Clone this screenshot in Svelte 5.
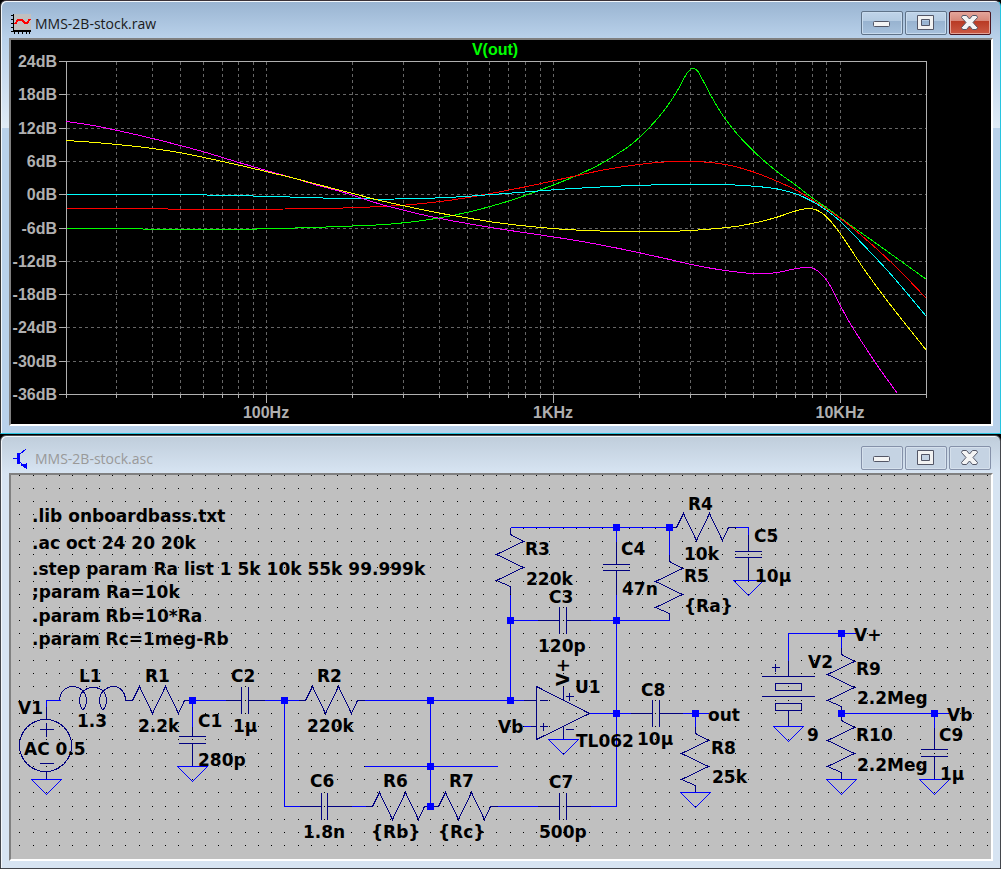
<script>
    // plot area in svg units: 20Hz..20kHz across, 24dB..-36dB down
    const left = 66
    const right = 926
    const top = 61
    const bottom = 394

    const xOf = f => Math.floor(left + 0.3 + (right - left) * Math.log10(f / 20) / 3)
    const yOf = db => Math.floor(top + 0.5 + (bottom - top) * (24 - db) / 60)

    const levels = [24, 18, 12, 6, 0, -6, -12, -18, -24, -30, -36]
    const freqs = [10, 100, 1000, 10000]
        .flatMap(decade => [1, 2, 3, 4, 5, 6, 7, 8, 9].map(n => n * decade))
        .filter(f => f > 20 && f < 20000)
    const decades = [
        { f: 100, text: '100Hz' },
        { f: 1000, text: '1KHz' },
        { f: 10000, text: '10KHz' }
    ]

    const traces = [
        {
            color: '#00ff00',
            points: [[66, 228], [280, 228], [310, 227], [340, 226], [363, 225], [385, 224], [403, 222.3], [420, 220.3], [440, 217.2], [467, 211.8], [489, 206.2], [509, 200.3], [525, 194.8], [553, 184.5], [580, 173.3], [600, 163.5], [616, 154], [632, 143], [648, 128], [660, 114.5], [670, 101], [677, 90], [682, 80.5], [687, 72], [690, 69], [693, 67.8], [697, 70.5], [703, 81], [712, 98], [720, 111.5], [738, 135], [754, 151.5], [776, 170.7], [795, 184.5], [812, 197.5], [827, 208], [853, 226.8], [880, 246], [926, 279]]
        },
        {
            color: '#ff0000',
            points: [[66, 208], [320, 208], [353, 207.2], [381, 206], [403, 204.7], [420, 203.2], [440, 201], [460, 198.2], [489, 193.2], [525, 186.3], [553, 180.3], [580, 174.3], [604, 169.3], [640, 163.8], [662, 161.6], [683, 160.8], [705, 161.6], [726, 164.2], [753, 171.5], [777, 181], [795, 189.3], [812, 199.5], [827, 209], [840, 218], [863, 236.7], [898, 269], [926, 298]]
        },
        {
            color: '#00ffff',
            points: [[66, 194], [180, 194], [232, 195], [280, 196.2], [315, 197.3], [353, 198.3], [395, 198.5], [420, 198], [440, 197.3], [467, 195.8], [489, 194.2], [525, 191.5], [553, 189.3], [600, 186.5], [640, 184.8], [690, 184], [726, 184.2], [753, 185.7], [778, 188.7], [795, 193.2], [812, 201], [827, 210.5], [840, 221], [863, 244.5], [887, 270], [926, 316]]
        },
        {
            color: '#ff00ff',
            points: [[66, 121], [88, 124.2], [116, 129.8], [152, 138], [180, 145.1], [203, 151.3], [240, 162.5], [267, 170.3], [292, 177.3], [316, 184.5], [340, 191], [381, 204], [403, 209.7], [439, 217.9], [467, 223], [489, 226.8], [525, 232.3], [553, 236.4], [587, 242], [620, 248.3], [639, 252.3], [667, 258.5], [690, 263.8], [726, 270.2], [753, 273], [768, 273], [778, 271.8], [796, 268], [804, 267], [811, 267.3], [817, 270.3], [823, 275.8], [829, 284], [839, 303.5], [850, 323.5], [863, 344], [881, 371], [897, 393]]
        },
        {
            color: '#ffff00',
            points: [[66, 140], [95, 142], [116, 143.9], [152, 148], [180, 152.3], [203, 156.9], [240, 165], [267, 171.4], [292, 177.4], [316, 183.7], [353, 193.2], [381, 200.3], [403, 205.2], [439, 212.6], [467, 217.5], [489, 221.1], [525, 225.5], [553, 228.1], [590, 230.2], [630, 231.2], [653, 231.2], [690, 230], [708, 228.7], [737, 225.7], [753, 222.7], [777, 216.5], [795, 210.5], [805, 208.2], [812, 208.3], [820, 211.6], [827, 217.3], [840, 233.5], [863, 268], [882, 294], [926, 350]]
        }
    ]

    // tangent at point i, weighted by the length of both neighbouring spans
    function slope(p, i) {
        const [x, y] = p[i]
        const [x0, y0] = p[i - 1] ?? [x, y]
        const [x1, y1] = p[i + 1] ?? [x, y]
        if (x === x0) return (y1 - y) / (x1 - x)
        if (x === x1) return (y - y0) / (x - x0)
        const before = (y - y0) / (x - x0)
        const after = (y1 - y) / (x1 - x)
        return (before * (x1 - x) + after * (x - x0)) / (x1 - x0)
    }

    function spline(p) {
        let d = `M${p[0][0]} ${p[0][1]}`
        for (let i = 0; i < p.length - 1; i++) {
            const [x0, y0] = p[i]
            const [x1, y1] = p[i + 1]
            const step = (x1 - x0) / 3
            d += ` C${x0 + step} ${y0 + slope(p, i) * step} ${x1 - step} ${y1 - slope(p, i + 1) * step} ${x1} ${y1}`
        }
        return d
    }

    // schematic
    let dots = ''
    for (let row = 0; row < 29; row++) {
        for (let col = 0; col < 74; col++) {
            dots += `M${Math.floor(19.9 + 13.25 * col)} ${Math.floor(475.1 + 13.24 * row)}h1v1h-1z`
        }
    }

    const wires = [
        'M46 706V700H60', 'M192 700H225', 'M264 700H298', 'M364 700H523', 'M192 700V726',
        'M284 700V806H299', 'M351 806H365', 'M364 766H497', 'M430 700V806', 'M497 806H537',
        'M590 806H616V594M616 541V527', 'M510 527H669V554', 'M510 594V700', 'M510 620H537',
        'M590 620H669', 'M616 713H630', 'M682 713H708', 'M695 713V726', 'M735 527H748V534',
        'M523 726H530', 'M788 660V633H855', 'M841 633V647', 'M841 713H948', 'M934 713V727',
        'M589 713H616'
    ]

    const pins = [
        'M46 706V719', 'M46 771V779', 'M225 700H241', 'M248 700H264', 'M192 726V736', 'M192 743V766',
        'M299 806H321', 'M327 806H351', 'M537 620H559', 'M566 620H590', 'M537 806H559', 'M566 806H590',
        'M616 541V564M616 570V594', 'M748 534V551M748 557V580', 'M630 713H652M659 713H682',
        'M934 727V749M934 756V779', 'M788 660V676M788 710V726'
    ]

    const hResistors = [[125, 700], [298, 700], [365, 806], [431, 806], [669, 527]]
    const vResistors = [[510, 527], [669, 554], [695, 726], [841, 647], [841, 713]]
    const hCaps = [[192, 736, 743], [616, 564, 570], [748, 551, 557], [934, 749, 756]]
    const vCaps = [[700, 241, 248], [806, 321, 327], [620, 559, 566], [806, 559, 566], [713, 652, 659]]
    const grounds = [[46, 779], [192, 766], [563, 739], [695, 792], [748, 580], [788, 726], [841, 779], [934, 779]]
    const nodes = [
        [192, 700], [284, 700], [430, 700], [510, 700], [430, 766], [430, 806], [510, 620], [616, 620],
        [616, 527], [669, 527], [616, 713], [695, 713], [841, 633], [841, 713], [934, 713]
    ]

    const labels = [
        ['.lib onboardbass.txt', 32, 522], ['.ac oct 24 20 20k', 32, 549],
        ['.step param Ra list 1 5k 10k 55k 99.999k', 32, 575], [';param Ra=10k', 32, 598],
        ['.param Rb=10*Ra', 32, 622], ['.param Rc=1meg-Rb', 32, 645],
        ['V1', 18, 714], ['AC 0.5', 24, 755], ['L1', 79, 682], ['1.3', 77, 727],
        ['R1', 145, 682], ['2.2k', 138, 732], ['C1', 198, 727], ['280p', 198, 766],
        ['C2', 231, 682], ['1µ', 233, 732], ['R2', 317, 682], ['220k', 307, 732],
        ['C6', 310, 787], ['1.8n', 303, 838], ['R6', 383, 787], ['{Rb}', 371, 838],
        ['R7', 449, 787], ['{Rc}', 438, 838], ['Vb', 498, 733], ['U1', 575, 693],
        ['TL062', 576, 747], ['C7', 549, 788], ['500p', 539, 838], ['C3', 549, 603],
        ['120p', 538, 652], ['R3', 525, 555], ['220k', 526, 585], ['C4', 621, 555],
        ['47n', 622, 595], ['R4', 688, 510], ['10k', 684, 560], ['R5', 684, 582],
        ['{Ra}', 684, 612], ['C5', 754, 542], ['10µ', 755, 582], ['C8', 641, 696],
        ['10µ', 637, 745], ['out', 708, 721], ['R8', 711, 754], ['25k', 712, 783],
        ['V+', 854, 641], ['V2', 808, 668], ['R9', 856, 675], ['2.2Meg', 857, 704],
        ['9', 807, 741], ['R10', 856, 741], ['2.2Meg', 857, 771], ['Vb', 947, 721],
        ['C9', 939, 741], ['1µ', 940, 780]
    ]
</script>

{#snippet controls()}
    <div class="controls">
        <button aria-label="Minimize">
            <svg width="38" height="20" viewBox="0 0 38 20">
                <rect x="10.5" y="8.5" width="16" height="5" rx="1" fill="#f4f4f4" stroke="#535666" />
            </svg>
        </button>
        <button aria-label="Maximize">
            <svg width="38" height="20" viewBox="0 0 38 20">
                <path d="M10.500 2.500h16v14h-16zM14.500 6.500v6h8v-6z" fill="#f2f2f2" fill-rule="evenodd" stroke="#535666" stroke-linejoin="round" />
            </svg>
        </button>
        <button class="close" aria-label="Close">
            <svg width="38" height="20" viewBox="0 0 38 20">
                <path d="M11.500 2.500h4l3 3.500 3-3.500h4l1 2-4.500 5 4.500 5-1 2h-4l-3-3.500-3 3.500h-4l-1-2 4.500-5-4.500-5z" fill="#f4f4f4" stroke="#535666" stroke-linejoin="round" />
            </svg>
        </button>
    </div>
{/snippet}

<main>
    <section class="window active">
        <header>
            <svg class="icon" width="20" height="20" viewBox="0 0 20 20" shape-rendering="crispEdges">
                <rect x="2" y="0" width="18" height="17" fill="#c0c0c0" />
                <path d="M2.500 0V17.500H20M0 1.500h2M0 5.500h2M0 9.500h2M0 13.500h2M0 17.500h2M3.500 18v2M7.500 18v2M11.500 18v2M15.500 18v2M18.500 18v2" fill="none" stroke="#000" />
                <path d="M3 17h17" stroke="#000" stroke-width="2" />
                <path d="M4 10L7 6H11L14 9H16L19 5" fill="none" stroke="#f00" stroke-width="2" />
            </svg>
            <h1>MMS-2B-stock.raw</h1>
            {@render controls()}
        </header>
        <div class="client">
            <svg class="plot" viewBox="11 40 980 384">
                <g transform="translate(.5 .5)" fill="none" shape-rendering="crispEdges">
                    <g stroke="#666" stroke-dasharray="3 3">
                        {#each freqs as f}
                            <path d="M{xOf(f)} {top}V{bottom}" />
                        {/each}
                        {#each levels.slice(1, -1) as db}
                            <path d="M{left} {yOf(db)}H{right}" />
                        {/each}
                    </g>
                    <g stroke="#b0b0b0">
                        <path d="M{left} {top}H{right}V{bottom}H{left}zM{left} {bottom}v3M{right} {bottom}v3" />
                        {#each levels as db}
                            <path d="M58 {yOf(db)}H{left}" />
                        {/each}
                        {#each freqs as f}
                            <path d="M{xOf(f)} {bottom}v3" />
                        {/each}
                        {#each decades as d}
                            <path d="M{xOf(d.f)} {bottom}v8" />
                        {/each}
                    </g>
                    {#each traces as trace}
                        <path d={spline(trace.points)} stroke={trace.color} />
                    {/each}
                </g>
                {#each levels as db}
                    <text class="tick" x="57" y={yOf(db) + 6} text-anchor="end">{db}dB</text>
                {/each}
                {#each decades as d}
                    <text class="tick" x={xOf(d.f)} y="418" text-anchor="middle">{d.text}</text>
                {/each}
                <text class="tick name" x="495" y="55" text-anchor="middle">V(out)</text>
            </svg>
        </div>
    </section>

    <section class="window">
        <header>
            <svg class="icon" width="20" height="20" viewBox="0 0 20 20" fill="none" stroke="#0000ff" shape-rendering="crispEdges">
                <path d="M2 9.500h5" />
                <path d="M7.500 4v11" stroke-width="3" />
                <path d="M9 5L15 0M9 13L13 17" />
                <path d="M10 16l5 3v-4z" fill="#0000ff" />
            </svg>
            <h1>MMS-2B-stock.asc</h1>
            {@render controls()}
        </header>
        <div class="client">
            <svg class="schematic" viewBox="11 475 980 384">
                <path d={dots} fill="#000" shape-rendering="crispEdges" />
                <g transform="translate(.5 .5)" fill="none" shape-rendering="crispEdges">
                    <g stroke="#000080">
                        {#each pins as d}
                            <path {d} />
                        {/each}
                        {#each hResistors as [x, y]}
                            <path d="M{x} {y}h7l7 -14l13 27l13 -27l13 27l6 -13h7" />
                        {/each}
                        {#each vResistors as [x, y]}
                            <path d="M{x} {y}v7l13 7l-27 13l27 13l-27 13l14 6v7" />
                        {/each}
                        {#each hCaps as [x, y1, y2]}
                            <path d="M{x - 14} {y1}h27M{x - 14} {y2}h27" />
                        {/each}
                        {#each vCaps as [y, x1, x2]}
                            <path d="M{x1} {y - 14}v27M{x2} {y - 14}v27" />
                        {/each}
                        <!-- L1 -->
                        <path d="M59 700C59 692 65 686 72 686C80 686 86 692 86 700C86 704 84 709 82 709C81 709 79 704 79 700C79 692 85 687 93 687C101 687 106 692 106 700C106 704 104 709 102 709C101 709 99 704 99 700C99 692 106 686 113 686C120 686 125 692 125 700" />
                        <!-- V1 -->
                        <circle cx="45" cy="745" r="26" />
                        <path d="M39 729h14M46 722v14M39 763h14" />
                        <!-- U1 -->
                        <path d="M536 686L589 713L536 739zM563 686v13M563 726v13M530 726h6M523 700h13" />
                        <path d="M539 700h8M539 726h8M543 722v8M565 696h8M569 692v8M565 729h8" />
                        <!-- V2 -->
                        <path d="M761 676h53M761 696h53M775 683h26v7h-26zM775 703h26v7h-26zM771 667h8M775 663v8" />
                    </g>
                    <g stroke="#0000ff">
                        {#each wires as d}
                            <path {d} />
                        {/each}
                        {#each grounds as [x, y]}
                            <path d="M{x - 15} {y}h30l-15 15z" />
                        {/each}
                    </g>
                </g>
                {#each nodes as [x, y]}
                    <rect x={x - 3} y={y - 3} width="7" height="7" fill="#0000ff" />
                {/each}
                {#each labels as [text, x, y]}
                    <text {x} {y}>{text}</text>
                {/each}
                <text transform="translate(569 686) rotate(-90)">V+</text>
            </svg>
        </div>
    </section>
</main>

<style>
    :global(body) {
        margin: 0;
        background: #000;
    }

    main {
        display: flex;
        flex-direction: column;
        gap: 1px;
    }

    .window {
        padding: 0 7px 7px 8px;
        border: 1px solid #43464c;
        border-radius: 6px 6px 0 0;
        background: linear-gradient(#bfcddb, #d7e4f2 37px);
        box-shadow: inset 1px 1px #f3f7fb;
    }

    .active {
        border-color: #3a3238 #27c4e0 #27c4e0 #333;
        background:
            linear-gradient(#b9d1ea, #e0ebf6) 0 38px / 100% 89px no-repeat,
            linear-gradient(#99b4d1, #b9d1ea 37px);
    }

    header {
        display: flex;
        align-items: center;
        gap: 4px;
        height: 37px;
        padding: 0 2px;
    }

    .icon {
        margin-top: 8px;
    }

    h1 {
        flex: 1;
        margin: 7px 0 0;
        color: #1a1a1a;
        font: 14px "Open Sans", "Noto Sans", sans-serif;
    }

    .window:not(.active) h1 {
        color: #999;
    }

    .controls {
        display: flex;
        gap: 2px;
        padding-top: 7px;
    }

    button {
        display: flex;
        align-items: center;
        justify-content: center;
        width: 42px;
        height: 24px;
        padding: 0;
        border: 1px solid #8591a9;
        border-radius: 2px;
        background: #c5d3e3;
        box-shadow: inset 0 0 0 1px #d5e0ec;
    }

    .active button {
        border-color: #5f7389;
        background: linear-gradient(#c0d4e9, #b4cbe2 42%, #98b3d0 43%, #a7c1dc);
        box-shadow: inset 0 0 0 1px #c8dbee;
    }

    .active .close {
        border-color: #4b1520;
        background: linear-gradient(#e3a59b, #d68678 42%, #b93b25 43%, #cb5a45);
        box-shadow: inset 0 0 0 1px #e3a397;
    }

    .client {
        border: 2px solid;
        border-color: #808080 #fff #fff #808080;
    }

    .plot,
    .schematic {
        display: block;
        width: 100%;
    }

    .plot {
        background: #000;
    }

    .schematic {
        background: #c0c0c0;
    }

    .tick {
        fill: #b0b0b0;
        font: bold 16px "Liberation Sans", Arial, sans-serif;
    }

    .name {
        fill: #00ff00;
    }

    .schematic text {
        fill: #000;
        font: bold 17px "DejaVu Sans", sans-serif;
    }
</style>
